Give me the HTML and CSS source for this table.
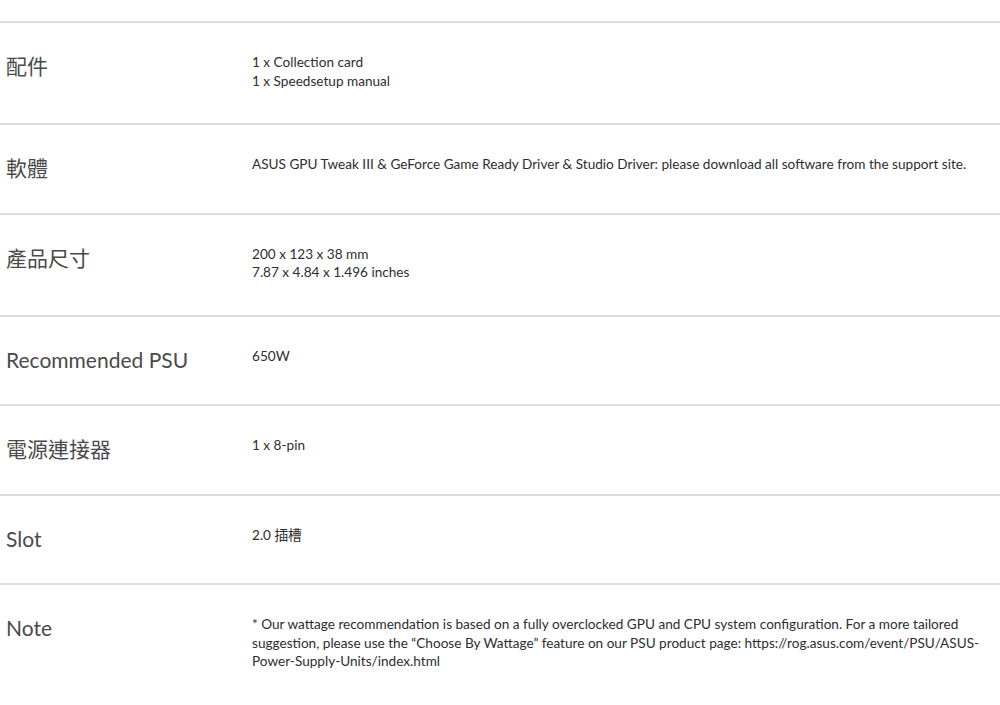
FILE: index.html
```
<!DOCTYPE html>
<html lang="zh-Hant">
<head>
    <meta charset="UTF-8">
    <meta name="viewport" content="width=device-width, initial-scale=1.0">
    <title>規格</title>
    <link rel="stylesheet" href="styles.css">
</head>
<body>
    <div class="specList">
        <div class="specRow">
            <div class="specName">配件</div>
            <div class="specValue">1 x Collection card<br>1 x Speedsetup manual</div>
        </div>
        <div class="specRow">
            <div class="specName">軟體</div>
            <div class="specValue">ASUS GPU Tweak III &amp; GeForce Game Ready Driver &amp; Studio Driver: please download all software from the support site.</div>
        </div>
        <div class="specRow">
            <div class="specName">產品尺寸</div>
            <div class="specValue">200 x 123 x 38 mm<br>7.87 x 4.84 x 1.496 inches</div>
        </div>
        <div class="specRow">
            <div class="specName">Recommended PSU</div>
            <div class="specValue">650W</div>
        </div>
        <div class="specRow">
            <div class="specName">電源連接器</div>
            <div class="specValue">1 x 8-pin</div>
        </div>
        <div class="specRow">
            <div class="specName">Slot</div>
            <div class="specValue">2.0 插槽</div>
        </div>
        <div class="specRow">
            <div class="specName">Note</div>
            <div class="specValue note">* Our wattage recommendation is based on a fully overclocked GPU and CPU system configuration. For a more tailored suggestion, please use the “Choose By Wattage” feature on our PSU product page: https://rog.asus.com/event/PSU/ASUS-Power-Supply-Units/index.html</div>
        </div>
    </div>
</body>
</html>
```

FILE: styles.css
```
body {
    margin: 0;
    background: #fff;
    font-family: 'Lato', 'Noto Sans CJK TC', sans-serif;
}
.specList {
    padding-top: 21px;
}
.specRow {
    display: flex;
    border-top: 2px solid #dddddd;
    padding: 30px 0 33px;
}
.specName {
    flex: 0 0 246px;
    padding: 1px 0 0 6px;
    font-size: 21px;
    line-height: 23.5px;
    color: #4a4a4a;
    font-family: 'Lato', 'Noto Sans CJK TC', sans-serif;
    font-weight: 400;
}
.specValue {
    flex: 1;
    padding-right: 15px;
    font-size: 13.6px;
    line-height: 18.5px;
    color: #2e2e2e;
    font-family: 'Lato', 'Noto Sans CJK TC', sans-serif;
}
```
